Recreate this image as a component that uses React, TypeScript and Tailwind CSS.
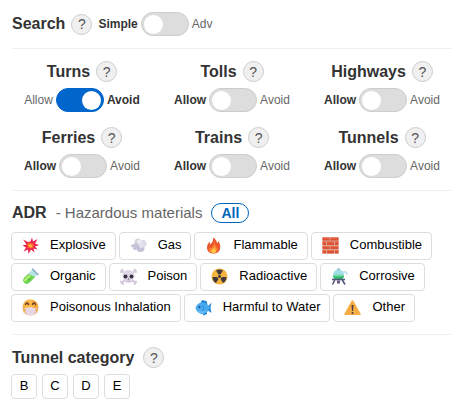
import { useState, type ReactNode } from "react";

const ExplosiveIcon = () => (
    <svg viewBox="0 0 34 34" className="size-[17px] shrink-0" aria-hidden="true">
        <path fill="#e9204f" d="M17 9 20 1l2 8 9-5-5 9 8 3-8 3 5 6-8-2 2 8-7-6-5 9-1-9-9 4 5-8-7-4 8-2L2 5l10 5z" />
        <path fill="#f7652b" d="m17 11 3 2 4-2-2 4 4 2-4 2 2 4-5-2-2 3-2-3-5 2 2-4-4-3 4-2-2-4 5 2z" />
        <path fill="#ffb43d" d="m17 13 1 3 3-1-1 3 1 2-3 1-2 1-1-3-3-1 2-2-1-2 3 1z" />
    </svg>
);

const GasIcon = () => (
    <svg viewBox="0 0 34 34" className="size-[17px] shrink-0" aria-hidden="true">
        <path fill="#c3bccf" d="m0 17 9-3 8 7-6 5-6-2 3-3-7-1 4-2z" />
        <circle cx="16" cy="10" r="7" fill="#d8d5e2" />
        <circle cx="26" cy="13" r="7" fill="#dcdaea" />
        <circle cx="14" cy="18" r="7" fill="#c8c2d6" />
        <circle cx="21" cy="22" r="8" fill="#c5c0d8" />
        <circle cx="19" cy="10" r="5" fill="#ebe9f1" />
        <circle cx="23" cy="17" r="5" fill="#e2e0ec" />
    </svg>
);

const FlameIcon = () => (
    <svg viewBox="0 0 34 34" className="size-[17px] shrink-0" aria-hidden="true">
        <path fill="#ee562e" d="M16 1c7 4 8 9 8 12l3-5c4 7 4 11 3 16-2 7-7 9-13 9C10 33 4 29 4 21c0-6 3-9 5-12l1 6c5-4 7-8 6-14z" />
        <path fill="#f88b32" d="M18 9c2 6 2 8 6 12 3 5-1 11-7 11S7 27 9 21l3 2c5-4 7-8 6-14z" />
        <path fill="#ffc442" d="M18 19c0 4 4 5 4 9 0 3-2 4-5 4-4 0-6-3-5-7l2 1c3-2 4-4 4-7z" />
    </svg>
);

const BrickIcon = () => (
    <svg viewBox="0 0 34 34" className="size-[17px] shrink-0" aria-hidden="true">
        <rect x="1" y="1" width="32" height="32" rx="1" fill="#d7a396" />
        <path fill="#dd5036" d="M1 1h14v6H1zm16 0h16v6H17zM1 9h7v7H1zm9 0h14v7H10zm16 0h7v7h-7zM1 18h14v6H1zm16 0h16v6H17zM1 26h7v7H1zm9 0h14v7H10zm16 0h7v7h-7z" />
        <path fill="#ee7046" d="M1 1h14v2H1zm16 0h16v2H17zM1 9h7v2H1zm9 0h14v2H10zm16 0h7v2h-7zM1 18h14v2H1zm16 0h16v2H17zM1 26h7v2H1zm9 0h14v2H10zm16 0h7v2h-7z" />
    </svg>
);

const OrganicIcon = () => (
    <svg viewBox="0 0 34 34" className="size-[17px] shrink-0" aria-hidden="true">
        <path fill="#b4e3e0" d="m21 3 10 10-17 17C7 35-1 27 4 20z" />
        <path fill="#6fd44c" d="m12 12 14 6-12 12C7 35-1 27 4 20z" />
        <path fill="#b4ed72" d="m13 14 5 2L7 27c-3 1-5-2-2-5z" />
        <path stroke="#8ca9c5" strokeWidth="3" strokeLinecap="round" d="m21 2 11 11" />
        <circle cx="14" cy="23" r="2" fill="#41b755" />
    </svg>
);

const PoisonIcon = () => (
    <svg viewBox="0 0 34 34" className="size-[17px] shrink-0" aria-hidden="true">
        <path stroke="#d2c8da" strokeWidth="4" strokeLinecap="round" d="m3 5 28 25M31 5 3 30M2 8l3-5m24 0 3 5M2 27l4 5m23 0 3-5" />
        <path fill="#ded8e6" d="M17 4c8 0 12 5 12 11 0 4-2 7-5 8v6H10v-6c-3-1-5-4-5-8C5 9 9 4 17 4z" />
        <circle cx="11" cy="17" r="4" fill="#393044" />
        <circle cx="23" cy="17" r="4" fill="#393044" />
        <path fill="#655573" d="m17 20 2 3h-4z" />
        <path stroke="#a99ab4" strokeWidth="1" d="M14 25v4m3-4v4m3-4v4" />
    </svg>
);

const RadioactiveIcon = () => (
    <svg viewBox="0 0 34 34" className="size-[17px] shrink-0" aria-hidden="true">
        <circle cx="17" cy="17" r="16" fill="#f4b43e" />
        <circle cx="17" cy="17" r="3" fill="#433942" />
        <path fill="#433942" d="M10 5a14 14 0 0 1 14 0l-5 8h-4zM3 18h9l3 4-5 8a14 14 0 0 1-7-12zm28 0h-9l-3 4 5 8a14 14 0 0 0 7-12z" />
    </svg>
);

const CorrosiveIcon = () => (
    <svg viewBox="0 0 34 34" className="size-[17px] shrink-0" aria-hidden="true">
        <path stroke="#c9e6ee" strokeWidth="4" fill="none" d="M18 8h9c4 0 5 2 5 6" />
        <circle cx="15" cy="14" r="11" fill="#a4dce8" />
        <path fill="#35b873" d="M4 15h22c0 6-5 9-11 9S4 21 4 15z" />
        <ellipse cx="15" cy="15" rx="10" ry="2" fill="#72dda0" />
        <path fill="#91bac8" d="M12 1h6v3h-6z" />
        <path stroke="#4f5779" strokeWidth="3" fill="none" d="M2 23h26M8 23 3 33m19-10 6 10" />
        <path fill="#6d557d" d="M12 25h6v6h-6z" />
    </svg>
);

const MaskIcon = () => (
    <svg viewBox="0 0 34 34" className="size-[17px] shrink-0" aria-hidden="true">
        <circle cx="17" cy="17" r="16" fill="#f5a638" />
        <circle cx="14" cy="12" r="11" fill="#fbb94a" />
        <path stroke="#693b2b" strokeWidth="3" fill="none" strokeLinecap="round" d="M7 11c1-4 5-4 6 0m8 0c1-4 5-4 6 0" />
        <path stroke="#ddcad8" strokeWidth="2" d="m1 17 6 3m26-3-6 3M3 27l6-2m22 2-6-2" />
        <path fill="#ead9ea" d="M7 18c5 1 7-2 10-2s5 3 10 2v9c-2 4-6 6-10 6S9 31 7 27z" />
        <path stroke="#d9c8df" strokeWidth="1" d="M9 22h16M9 26h16" />
    </svg>
);

const FishIcon = () => (
    <svg viewBox="0 0 34 34" className="size-[17px] shrink-0" aria-hidden="true">
        <path fill="#2382d1" d="m10 10 4-8 9 2 2 8-5 3zm3 15 4 8 7-3-1-8z" />
        <path fill="#2e8bdc" d="m24 16 9-9-2 10 2 11-9-6z" />
        <path fill="#48a9ef" d="M1 18C3 10 10 6 17 7c6 1 10 6 12 11-3 8-8 12-14 12C8 30 3 25 1 18z" />
        <path fill="#6bbdf6" d="M3 23c7 2 13 2 21 0-4 6-15 8-21 0z" />
        <circle cx="9" cy="16" r="2" fill="#244a79" />
        <path stroke="#2f8bd8" strokeWidth="2" fill="none" d="M15 12c3 4 3 8 0 12" />
    </svg>
);

const WarningIcon = () => (
    <svg viewBox="0 0 34 34" className="size-[17px] shrink-0" aria-hidden="true">
        <path fill="#f6ad45" d="M15 4c1-2 3-2 4 0l14 25c1 2 0 3-2 3H3c-2 0-3-1-2-3z" />
        <path fill="#493f42" d="M15 12h4l-1 12h-2z" />
        <circle cx="17" cy="28" r="2" fill="#493f42" />
    </svg>
);

const Help = ({ topic }: { topic: string }) => (
    <button type="button" aria-label={`Help: ${topic}`} className="flex size-[21px] shrink-0 items-center justify-center rounded-full border border-[#cccccc] bg-[#f0f0f0] text-sm leading-none text-[#555555]">
        ?
    </button>
);

type ToggleProps = { name: string; off: string; on: string; initial?: boolean };

const Toggle = ({ name, off, on, initial = false }: ToggleProps) => {
    const [checked, setChecked] = useState(initial);

    return (
        <label className="flex items-center gap-[3px] text-xs">
            <span className={checked ? "text-[#666666]" : "font-bold text-[#333333]"}>{off}</span>
            <input
                type="checkbox"
                role="switch"
                aria-label={name}
                checked={checked}
                onChange={(e) => setChecked(e.target.checked)}
                className="flex h-6 w-12 shrink-0 appearance-none items-center rounded-full border border-[#cccccc] bg-[#dddddd] px-0.5 before:size-[19px] before:rounded-full before:bg-white checked:justify-end checked:border-[#0066cc] checked:bg-[#0066cc]"
            />
            <span className={checked ? "font-bold text-[#333333]" : "text-[#666666]"}>{on}</span>
        </label>
    );
};

const Section = ({ children }: { children: ReactNode }) => (
    <section className="border-b border-[#eeeeee] py-3 last:border-b-0">{children}</section>
);

const roads = ["Turns", "Tolls", "Highways", "Ferries", "Trains", "Tunnels"];

const materials = [
    { icon: <ExplosiveIcon />, text: "Explosive" },
    { icon: <GasIcon />, text: "Gas" },
    { icon: <FlameIcon />, text: "Flammable" },
    { icon: <BrickIcon />, text: "Combustible" },
    { icon: <OrganicIcon />, text: "Organic" },
    { icon: <PoisonIcon />, text: "Poison" },
    { icon: <RadioactiveIcon />, text: "Radioactive" },
    { icon: <CorrosiveIcon />, text: "Corrosive" },
    { icon: <MaskIcon />, text: "Poisonous Inhalation" },
    { icon: <FishIcon />, text: "Harmful to Water" },
    { icon: <WarningIcon />, text: "Other" },
];

const App = () => {
    return (
        <main className="min-h-screen bg-white px-3 font-['Liberation_Sans',Arial,sans-serif] text-[#333333]">
            <Section>
                <div className="flex items-center gap-1.5">
                    <h2 className="text-base leading-5 font-bold">Search</h2>
                    <Help topic="Search" />
                    <Toggle name="Search mode" off="Simple" on="Adv" />
                </div>
            </Section>

            <Section>
                <div className="-mx-[5px] grid grid-cols-3 gap-y-[15px]">
                    {roads.map((road) => (
                        <div key={road} className="flex flex-col items-center gap-1.5">
                            <div className="flex items-center gap-1.5">
                                <h2 className="text-base leading-5 font-bold">{road}</h2>
                                <Help topic={road} />
                            </div>
                            <Toggle name={`Avoid ${road}`} off="Allow" on="Avoid" initial={road === "Turns"} />
                        </div>
                    ))}
                </div>
            </Section>

            <Section>
                <div className="flex items-center gap-[9px]">
                    <h2 className="text-base leading-5 font-bold">ADR</h2>
                    <span className="text-[15px] leading-5 text-[#666666]">- Hazardous materials</span>
                    <button type="button" className="h-5 rounded-full border border-[#0066bb] px-[9px] text-sm leading-none font-bold text-[#0066bb]">
                        All
                    </button>
                </div>
                <div className="-mx-px mt-[9px] flex flex-wrap gap-[3px]">
                    {materials.map((material) => (
                        <button type="button" key={material.text} className="flex h-7 items-center gap-[11px] rounded border border-[#dddddd] pr-[9px] pb-0.5 pl-2.5 text-[13px] text-black">
                            {material.icon}
                            {material.text}
                        </button>
                    ))}
                </div>
            </Section>

            <Section>
                <div className="flex items-center gap-[9px]">
                    <h2 className="text-base leading-5 font-bold">Tunnel category</h2>
                    <Help topic="Tunnel category" />
                </div>
                <div className="-mx-px mt-1.5 flex gap-[5px]">
                    {["B", "C", "D", "E"].map((category) => (
                        <button type="button" key={category} className="h-[25px] w-[26px] rounded border border-[#dddddd] pb-0.5 text-[13px] text-black">
                            {category}
                        </button>
                    ))}
                </div>
            </Section>
        </main>
    );
};

export default App;
